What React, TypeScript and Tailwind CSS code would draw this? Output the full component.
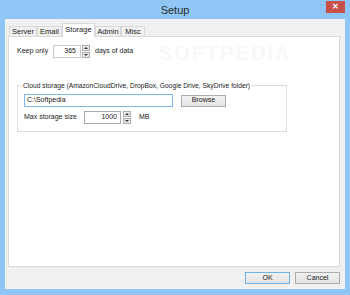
import { ReactNode } from "react";

const font = { fontFamily: '"Liberation Sans", Arial, sans-serif' };

function Spinner() {
  return (
    <div className="flex flex-col w-[8px] h-[13px] gap-[1px]">
      <div className="flex-1 flex items-center justify-center border border-[#acacac] bg-[#e8e8e8]">
        <div className="w-0 h-0 border-l-[2px] border-r-[2px] border-b-[2px] border-l-transparent border-r-transparent border-b-[#333]" />
      </div>
      <div className="flex-1 flex items-center justify-center border border-[#acacac] bg-[#e8e8e8]">
        <div className="w-0 h-0 border-l-[2px] border-r-[2px] border-t-[2px] border-l-transparent border-r-transparent border-t-[#333]" />
      </div>
    </div>
  );
}

function Tab({ label, active, width }: { label: string; active?: boolean; width: string }) {
  return (
    <div
      className={`${width} flex items-center justify-center border border-[#d9d9d9] text-[7.5px] text-[#222] ${
        active ? "h-[14px] bg-white border-b-white -mb-[1px] z-10" : "h-[10px] bg-[#f0f0f0] border-b-0"
      }`}
    >
      {label}
    </div>
  );
}

function Button({ children, focused }: { children: ReactNode; focused?: boolean }) {
  return (
    <div
      className={`w-[45px] h-[12px] flex items-center justify-center text-[7px] text-[#222] bg-gradient-to-b from-[#f2f2f2] to-[#e3e3e3] border ${
        focused ? "border-[#6fb2e8]" : "border-[#acacac]"
      }`}
    >
      {children}
    </div>
  );
}

export default function App() {
  return (
    <div className="w-[350px] h-[295px] bg-[#8fc6f5] flex flex-col" style={font}>
      <div className="h-[19px] relative flex items-center justify-center">
        <span className="text-[11px] text-[#2a2a2a] mt-[1px]">Setup</span>
        <div className="absolute right-[5px] top-[1px] w-[19px] h-[12px] bg-[#c7504b] flex items-center justify-center text-white text-[8px] font-bold">
          ✕
        </div>
      </div>
      <div className="mx-[5px] h-[270px] bg-[#f0f0f0] flex flex-col pl-[3px] pr-[5px] pt-[4px]">
        <div className="flex items-end pl-[1px] h-[13px]">
          <Tab label="Server" width="w-[28px]" />
          <Tab label="Email" width="w-[25px]" />
          <Tab label="Storage" width="w-[33px]" active />
          <Tab label="Admin" width="w-[26px]" />
          <Tab label="Misc" width="w-[24px]" />
        </div>
        <div className="relative h-[231px] bg-white border border-[#d9d9d9] pt-[8px] pl-[8px] text-[7px] text-[#222]">
          <div className="absolute left-[150px] top-[1px] text-[20px] font-bold tracking-[2px] text-[#f8f8f8] select-none">
            SOFTPEDIA
          </div>
          <div className="relative flex items-center h-[13px]">
            <span className="w-[36px]">Keep only</span>
            <div className="w-[28px] h-[13px] border border-[#c8c8c8] flex items-center justify-end pr-[4px]">365</div>
            <div className="ml-[1px]">
              <Spinner />
            </div>
            <span className="ml-[5px]">days of data</span>
          </div>
          <div className="relative mt-[27px] w-[270px] h-[47px] border border-[#dcdcdc] px-[6px] pt-[8px]">
            <span className="absolute left-[4px] top-[-5px] bg-white px-[1px] leading-[9px] text-[6.7px]">
              Cloud storage (AmazonCloudDrive, DropBox, Google Drive, SkyDrive folder)
            </span>
            <div className="flex items-center gap-[8px]">
              <div className="w-[149px] h-[13px] border border-[#7eb4ea] flex items-center pl-[2px]">C:\Softpedia</div>
              <Button>Browse</Button>
            </div>
            <div className="flex items-center mt-[4px]">
              <span className="w-[60px]">Max storage size</span>
              <div className="w-[37px] h-[13px] border border-[#ababab] flex items-center justify-end pr-[3px]">1000</div>
              <div className="ml-[2px]">
                <Spinner />
              </div>
              <span className="ml-[8px]">MB</span>
            </div>
          </div>
        </div>
        <div className="flex justify-end gap-[5px] mt-[5px]">
          <Button focused>OK</Button>
          <Button>Cancel</Button>
        </div>
      </div>
    </div>
  );
}
